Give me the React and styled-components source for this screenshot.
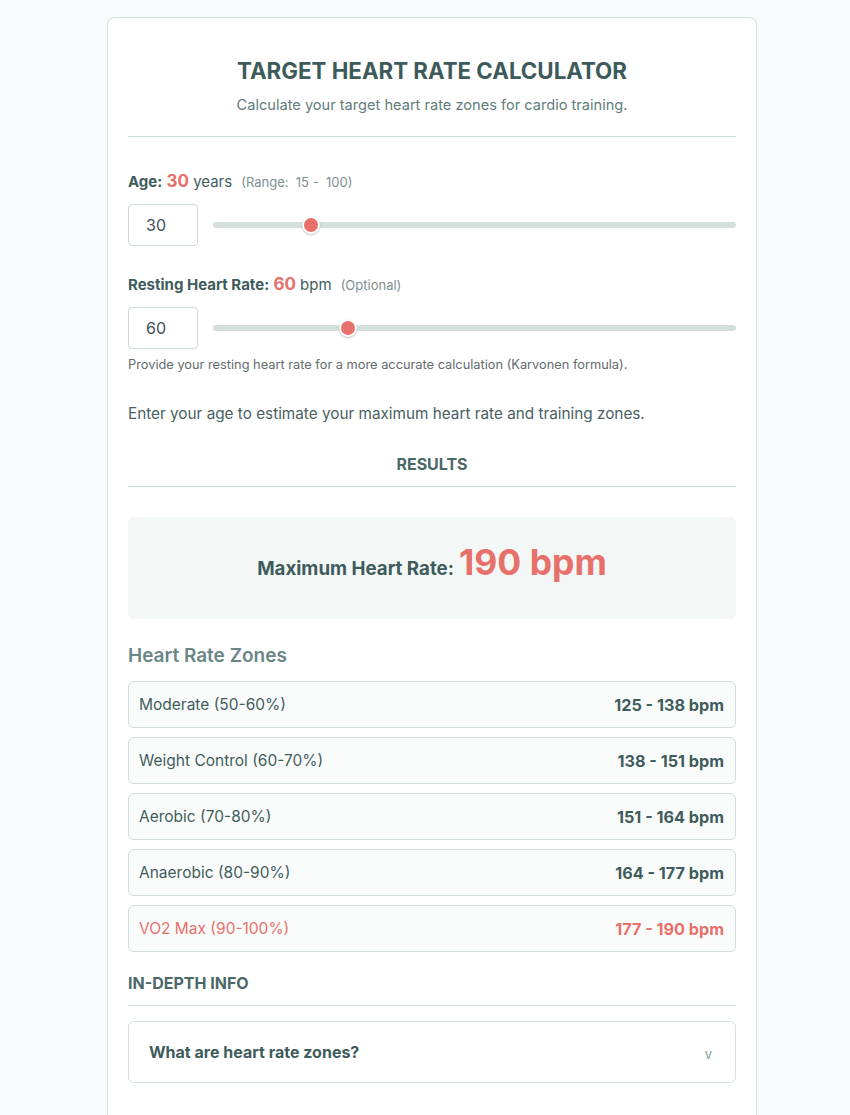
import React, { useState } from 'react';
import styled, { createGlobalStyle } from 'styled-components';

const zones = [
    { key: 'moderate', label: 'Moderate (50-60%)', range: '125 - 138 bpm' },
    { key: 'weight', label: 'Weight Control (60-70%)', range: '138 - 151 bpm' },
    { key: 'aerobic', label: 'Aerobic (70-80%)', range: '151 - 164 bpm' },
    { key: 'anaerobic', label: 'Anaerobic (80-90%)', range: '164 - 177 bpm' },
    { key: 'vo2', label: 'VO2 Max (90-100%)', range: '177 - 190 bpm', peak: true },
];

const GlobalStyle = createGlobalStyle`
    body {
        margin: 0;
        background: #f8fafb;
        font-family: Inter, 'Noto Sans', sans-serif;
        color: #3f5c5c;
    }
`

const App = () => {
    const [age, setAge] = useState(30);
    const [rest, setRest] = useState(60);

    return (
        <Page>
            <GlobalStyle />
            <Card>
                <Header>
                    <h1>Target Heart Rate Calculator</h1>
                    <p>Calculate your target heart rate zones for cardio training.</p>
                </Header>

                <Field>
                    <Label>
                        <strong>Age:</strong> <Value>{age}</Value> years
                        <Hint>(Range: &nbsp;15 - &nbsp;100)</Hint>
                    </Label>
                    <Controls>
                        <NumberBox value={age} onChange={e => setAge(e.target.value)} />
                        <Slider min={15} max={100} value={age} onChange={e => setAge(e.target.value)} />
                    </Controls>
                </Field>

                <Field>
                    <Label>
                        <strong>Resting Heart Rate:</strong> <Value>{rest}</Value> bpm
                        <Hint>(Optional)</Hint>
                    </Label>
                    <Controls>
                        <NumberBox value={rest} onChange={e => setRest(e.target.value)} />
                        <Slider min={40} max={120} value={rest} onChange={e => setRest(e.target.value)} />
                    </Controls>
                    <Help>Provide your resting heart rate for a more accurate calculation (Karvonen formula).</Help>
                </Field>

                <Intro>Enter your age to estimate your maximum heart rate and training zones.</Intro>

                <SectionTitle center>Results</SectionTitle>

                <MaxBox>
                    <span>Maximum Heart Rate:</span> <em>190 bpm</em>
                </MaxBox>

                <ZonesTitle>Heart Rate Zones</ZonesTitle>
                <ZoneList>
                    {
                        zones.map(zone => (
                            <ZoneRow key={zone.key} peak={zone.peak}>
                                <span>{zone.label}</span>
                                <strong>{zone.range}</strong>
                            </ZoneRow>
                        ))
                    }
                </ZoneList>

                <SectionTitle>In-Depth Info</SectionTitle>
                <Accordion>
                    <span>What are heart rate zones?</span>
                    <Chevron>v</Chevron>
                </Accordion>
            </Card>
        </Page>
    )
}

export default App;

const Page = styled.div`
    display: flex;
    justify-content: center;
    padding: 17px 0 0 14px;
`
const Card = styled.div`
    width: 608px;
    background: #fff;
    border: 1px solid #d3dfdc;
    border-radius: 8px;
    padding: 18px 20px 60px;
`
const Header = styled.div`
    text-align: center;
    border-bottom: 1px solid #cfdcd9;
    padding: 21px 0 22px;
    margin-bottom: 30px;

    h1 {
        margin: 0;
        font-size: 22.3px;
        font-weight: 700;
        text-transform: uppercase;
        color: #3d5b5b;
    }
    p {
        margin: 12px 0 0;
        font-size: 14.6px;
        color: #627c7c;
    }
`
const Field = styled.div`
    margin-bottom: 24px;
`
const Label = styled.div`
    font-size: 15px;
    line-height: 28px;
    color: #3f5c5c;

    strong {
        font-weight: 700;
    }
`
const Value = styled.span`
    color: #e8706a;
    font-weight: 700;
    font-size: 17px;
`
const Hint = styled.span`
    margin-left: 9px;
    font-size: 13px;
    color: #7d9090;
`
const Controls = styled.div`
    display: flex;
    align-items: center;
    gap: 15px;
    margin-top: 8px;
`
const NumberBox = styled.input.attrs({ type: 'text' })`
    box-sizing: border-box;
    width: 70px;
    height: 42px;
    border: 1px solid #cddad7;
    border-radius: 4px;
    padding: 0 17px;
    font-family: Inter, sans-serif;
    font-size: 16px;
    color: #3c5058;
    outline: none;
`
const Slider = styled.input.attrs({ type: 'range' })`
    flex: 1;
    margin: 0;
    height: 18px;
    appearance: none;
    background: transparent;

    &::-webkit-slider-runnable-track {
        height: 6px;
        border-radius: 3px;
        background: #d3e0dd;
    }
    &::-webkit-slider-thumb {
        appearance: none;
        width: 18px;
        height: 18px;
        margin-top: -6px;
        border-radius: 50%;
        background: #e8706a;
        border: 2px solid #fff;
        box-sizing: border-box;
        box-shadow: 0 1px 2px rgba(0, 0, 0, 0.25);
    }
`
const Help = styled.div`
    margin-top: 8px;
    font-size: 12.8px;
    color: #636b6e;
`
const Intro = styled.p`
    margin: 32px 0 0;
    font-size: 15.3px;
    color: #49605f;
`
const SectionTitle = styled.div`
    font-size: 16px;
    font-weight: 700;
    text-transform: uppercase;
    color: #4c6868;
    text-align: ${props => props.center ? 'center' : 'left'};
    border-bottom: 1px solid #cfdcd9;
    padding: 31px 0 12px;
    margin-bottom: 15px;
`
const MaxBox = styled.div`
    display: flex;
    justify-content: center;
    align-items: baseline;
    gap: 5px;
    height: 102px;
    box-sizing: border-box;
    padding-top: 24px;
    background: #f3f7f6;
    border-radius: 6px;
    margin-top: 30px;

    span {
        font-size: 18.7px;
        font-weight: 700;
        color: #3f5c5c;
    }
    em {
        font-style: normal;
        font-size: 35.5px;
        font-weight: 700;
        color: #e8706a;
    }
`
const ZonesTitle = styled.h3`
    margin: 25px 0 14px;
    font-size: 19px;
    font-weight: 600;
    color: #6b8686;
`
const ZoneList = styled.div`
    display: grid;
    gap: 9px;
    margin-bottom: -10px;
`
const ZoneRow = styled.div`
    display: flex;
    justify-content: space-between;
    align-items: center;
    height: 47px;
    box-sizing: border-box;
    padding: 0 11px 0 10px;
    background: #fafcfb;
    border: 1px solid #d1dedb;
    border-radius: 6px;
    color: ${props => props.peak ? '#e8706a' : '#3f5c5c'};

    span {
        font-size: 15.5px;
    }
    strong {
        font-size: 16.2px;
        font-weight: 700;
    }
`
const Accordion = styled.div`
    display: flex;
    justify-content: space-between;
    align-items: center;
    height: 62px;
    box-sizing: border-box;
    padding: 0 23px 0 20px;
    border: 1px solid #d1dedb;
    border-radius: 6px;
    margin-top: 14px;

    span {
        font-size: 16px;
        font-weight: 700;
        color: #3f5c5c;
    }
`
const Chevron = styled.i`
    font-style: normal;
    font-size: 13px;
    color: #7da59a;
    margin-top: 4px;
`
